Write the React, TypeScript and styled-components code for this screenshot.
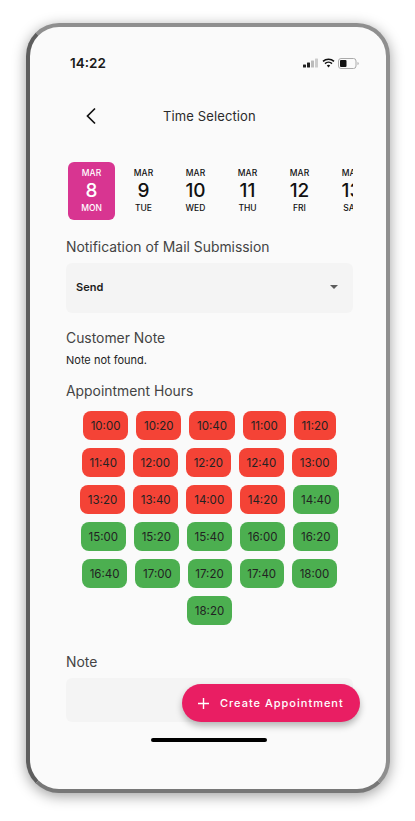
import React from "react";
import styled, { createGlobalStyle } from "styled-components";

const GlobalStyle = createGlobalStyle`
  html, body {
    margin: 0;
    padding: 0;
    background: #fff;
    font-family: Inter, "Liberation Sans", sans-serif;
  }
`;

const Page = styled.div`
  width: 415px;
  height: 821px;
  padding: 23px 25px 28px 26px;
  box-sizing: border-box;
  overflow: hidden;
`;

const Phone = styled.div`
  position: relative;
  width: 364px;
  height: 770px;
  box-sizing: border-box;
  padding: 0 33px 0 36px;
  background: #fafafa;
  border-radius: 33px;
  border: 4px solid #8f8f8f;
  border-left-color: #5e5e5e;
  border-bottom-color: #777;
  box-shadow: 0 3px 14px rgba(0, 0, 0, 0.38);
  display: flex;
  flex-direction: column;
`;

const StatusBar = styled.div`
  display: flex;
  align-items: center;
  justify-content: space-between;
  height: 18px;
  margin: 27px -6px 0 4px;
`;

const Clock = styled.span`
  font-size: 13.5px;
  font-weight: 600;
  color: #1a1a1a;
`;

const StatusIcons = styled.div`
  display: flex;
  align-items: center;
  gap: 3px;
`;

const NavBar = styled.div`
  display: flex;
  align-items: center;
  height: 24px;
  margin-top: 32px;
`;

const BackButton = styled.div`
  display: flex;
  align-items: center;
  margin-left: 19px;
  width: 78px;
`;

const Title = styled.h1`
  margin: 0;
  font-size: 13px;
  font-weight: 400;
  letter-spacing: 0.12px;
  color: #2b2b2b;
`;

const DateStrip = styled.div`
  display: flex;
  gap: 5px;
  width: 285px;
  margin: 34px 0 0 2px;
  overflow: hidden;
`;

const DateItem = styled.div<{ $active?: boolean }>`
  flex: 0 0 47px;
  height: 58px;
  box-sizing: border-box;
  border-radius: 6px;
  display: flex;
  flex-direction: column;
  align-items: center;
  justify-content: center;
  background: ${(p) => (p.$active ? "#d83591" : "transparent")};
  color: ${(p) => (p.$active ? "#fff" : "#111")};
`;

const DateSmall = styled.span`
  font-size: 8.5px;
  font-weight: 500;
  line-height: 11px;
`;

const DateNumber = styled.span`
  font-size: 19px;
  font-weight: 500;
  line-height: 24px;
`;

const SectionLabel = styled.div<{ $top: number }>`
  margin-top: ${(p) => p.$top}px;
  font-size: 13.9px;
  line-height: 18px;
  font-weight: 400;
  color: #444;
`;

const SelectBox = styled.div`
  display: flex;
  align-items: center;
  justify-content: space-between;
  height: 50px;
  margin-top: 7px;
  padding: 0 15px 2px 10px;
  box-sizing: border-box;
  border-radius: 6px;
  background: #f4f4f4;
`;

const SelectValue = styled.span`
  font-size: 11px;
  font-weight: 600;
  color: #1c1c1c;
`;

const Caret = styled.span`
  width: 0;
  height: 0;
  border-left: 4.5px solid transparent;
  border-right: 4.5px solid transparent;
  border-top: 4.5px solid #5c5c5c;
`;

const NoteText = styled.div`
  margin-top: 6px;
  font-size: 11px;
  line-height: 14px;
  color: #222;
`;

const SlotGrid = styled.div`
  display: flex;
  flex-wrap: wrap;
  justify-content: center;
  gap: 8px 8px;
  margin-top: 11px;
`;

const Slot = styled.div<{ $free: boolean }>`
  height: 29px;
  padding: 0 7.8px;
  display: flex;
  align-items: center;
  border-radius: 8px;
  font-size: 11.5px;
  color: #222;
  background: ${(p) => (p.$free ? "#4caf50" : "#f44336")};
`;

const NoteField = styled.div`
  height: 44px;
  margin-top: 7px;
  border-radius: 6px;
  background: #f4f4f4;
`;

const Fab = styled.button`
  position: absolute;
  left: 152px;
  top: 657px;
  width: 178px;
  height: 38px;
  padding: 0 0 0 15px;
  display: flex;
  align-items: center;
  gap: 10px;
  border: 0;
  border-radius: 19px;
  background: #e91e63;
  color: #fff;
  font-family: inherit;
  font-size: 11px;
  font-weight: 500;
  letter-spacing: 1px;
  box-shadow: 0 4px 7px rgba(0, 0, 0, 0.28);
`;

const HomeBar = styled.div`
  width: 116px;
  height: 4px;
  margin: 16px auto 0;
  transform: translateX(-1px);
  border-radius: 2px;
  background: #000;
`;

const dates = [
  { month: "MAR", day: "8", week: "MON" },
  { month: "MAR", day: "9", week: "TUE" },
  { month: "MAR", day: "10", week: "WED" },
  { month: "MAR", day: "11", week: "THU" },
  { month: "MAR", day: "12", week: "FRI" },
  { month: "MAR", day: "13", week: "SAT" },
];

const busySlots = [
  "10:00", "10:20", "10:40", "11:00", "11:20",
  "11:40", "12:00", "12:20", "12:40", "13:00",
  "13:20", "13:40", "14:00", "14:20",
];

const freeSlots = [
  "14:40", "15:00", "15:20", "15:40", "16:00", "16:20",
  "16:40", "17:00", "17:20", "17:40", "18:00", "18:20",
];

const StatusGlyphs = () => (
  <StatusIcons>
    <svg width="16" height="10" viewBox="0 0 16 10">
      <rect x="0" y="6.5" width="3" height="3" rx="0.5" fill="#222" />
      <rect x="4" y="4.5" width="3" height="5" rx="0.5" fill="#222" />
      <rect x="8" y="2.5" width="3" height="7" rx="0.5" fill="#bbb" />
      <rect x="12" y="0.5" width="3" height="9" rx="0.5" fill="#ccc" />
    </svg>
    <svg width="13" height="10" viewBox="0 0 13 10" fill="none">
      <path d="M1 3.4a8 8 0 0 1 11 0" stroke="#111" strokeWidth="1.5" />
      <path d="M3 5.6a5 5 0 0 1 7 0" stroke="#111" strokeWidth="1.5" />
      <path d="M6.5 9.6 4.8 7.6a2.6 2.6 0 0 1 3.4 0z" fill="#111" />
    </svg>
    <svg width="21" height="11" viewBox="0 0 21 11" fill="none">
      <rect x="0.5" y="0.5" width="17.5" height="10" rx="2.5" stroke="#aaa" />
      <rect x="2" y="2" width="6.5" height="7" rx="1" fill="#111" />
      <path d="M19.5 4v3c.8-.2 1.2-.8 1.2-1.5s-.4-1.3-1.2-1.5z" fill="#aaa" />
    </svg>
  </StatusIcons>
);

const App: React.FC = () => (
  <Page>
    <GlobalStyle />
    <Phone>
      <StatusBar>
        <Clock>14:22</Clock>
        <StatusGlyphs />
      </StatusBar>
      <NavBar>
        <BackButton>
          <svg width="12" height="18" viewBox="0 0 12 18" fill="none">
            <path d="M10 1.5 2.5 9l7.5 7.5" stroke="#111" strokeWidth="1.7" />
          </svg>
        </BackButton>
        <Title>Time Selection</Title>
      </NavBar>
      <DateStrip>
        {dates.map((d, i) => (
          <DateItem key={d.day} $active={i === 0}>
            <DateSmall>{d.month}</DateSmall>
            <DateNumber>{d.day}</DateNumber>
            <DateSmall>{d.week}</DateSmall>
          </DateItem>
        ))}
      </DateStrip>
      <SectionLabel $top={18}>Notification of Mail Submission</SectionLabel>
      <SelectBox>
        <SelectValue>Send</SelectValue>
        <Caret />
      </SelectBox>
      <SectionLabel $top={16}>Customer Note</SectionLabel>
      <NoteText>Note not found.</NoteText>
      <SectionLabel $top={15}>Appointment Hours</SectionLabel>
      <SlotGrid>
        {busySlots.map((t) => (
          <Slot key={t} $free={false}>{t}</Slot>
        ))}
        {freeSlots.map((t) => (
          <Slot key={t} $free>{t}</Slot>
        ))}
      </SlotGrid>
      <SectionLabel $top={28}>Note</SectionLabel>
      <NoteField />
      <HomeBar />
      <Fab>
        <svg width="13" height="13" viewBox="0 0 13 13" fill="none">
          <path d="M6.5 1v11M1 6.5h11" stroke="#fff" strokeWidth="1.4" />
        </svg>
        Create Appointment
      </Fab>
    </Phone>
  </Page>
);

export default App;
